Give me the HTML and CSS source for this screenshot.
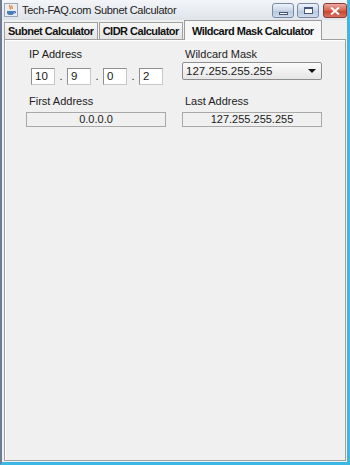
FILE: index.html
```html
<!DOCTYPE html>
<html lang="en">
<head>
  <meta charset="UTF-8">
  <title>Tech-FAQ.com Subnet Calculator</title>
  <link rel="stylesheet" href="styles.css">
</head>
<body>
  <div class="window">
    <div class="titlebar">
      <svg class="app-icon" width="14" height="14" viewBox="0 0 14 14">
        <rect x="0.5" y="0.5" width="13" height="13" fill="#e9edf2" stroke="#9aa6b6"/>
        <path d="M6 2 C4.5 3.5 7.5 4.5 6 6.5 M8 2.5 C7 4 9 4.5 8 6" fill="none" stroke="#e07820" stroke-width="1.2"/>
        <path d="M3 8 H10 V9.5 C10 11 9 12 7.5 12 H5.5 C4 12 3 11 3 9.5 Z" fill="#4a7ab8"/>
        <path d="M10 8.5 H11.5 V10 H10" fill="none" stroke="#4a7ab8" stroke-width="1"/>
      </svg>
      <span class="title">Tech-FAQ.com Subnet Calculator</span>
      <div class="controls">
        <div class="ctl"><span class="min-glyph"></span></div>
        <div class="ctl"><span class="max-glyph"></span></div>
        <div class="ctl close">
          <svg width="10" height="8" viewBox="0 0 10 8">
            <path d="M1 0.5 L9 7.5 M9 0.5 L1 7.5" stroke="#fff" stroke-width="2"/>
          </svg>
        </div>
      </div>
    </div>

    <div class="tabs">
      <div class="tab">Subnet Calculator</div>
      <div class="tab">CIDR Calculator</div>
      <div class="tab active">Wildcard Mask Calculator</div>
    </div>

    <div class="panel">
      <div class="row">
        <div class="col">
          <div class="label">IP Address</div>
          <div class="ip-row">
            <div class="octet">10</div><span class="dot">.</span>
            <div class="octet">9</div><span class="dot">.</span>
            <div class="octet">0</div><span class="dot">.</span>
            <div class="octet">2</div>
          </div>
        </div>
        <div class="col">
          <div class="label">Wildcard Mask</div>
          <div class="combo">
            <span>127.255.255.255</span>
            <span class="arrow"></span>
          </div>
        </div>
      </div>

      <div class="row second">
        <div class="col">
          <div class="label">First Address</div>
          <div class="readout">0.0.0.0</div>
        </div>
        <div class="col">
          <div class="label">Last Address</div>
          <div class="readout">127.255.255.255</div>
        </div>
      </div>
    </div>
  </div>
</body>
</html>
```

FILE: styles.css
```css
* {
  box-sizing: border-box;
  margin: 0;
  padding: 0;
}

body {
  width: 350px;
  height: 465px;
  background: #f0f0f0;
  font-family: "Liberation Sans", Arial, sans-serif;
  font-size: 11px;
  color: #1a1a1a;
}

.window {
  width: 350px;
  height: 465px;
  display: flex;
  flex-direction: column;
  border-left: 2px solid #6f7b92;
  border-right: 3px solid #3cb8e6;
  border-bottom: 3px solid #3cb8e6;
  background: #f0f0f0;
}

.titlebar {
  height: 20px;
  display: flex;
  align-items: center;
  background: linear-gradient(#f3f5f8, #dfe4ea);
  padding-left: 2px;
}

.app-icon {
  flex: none;
}

.title {
  margin-left: 4px;
  font-size: 11px;
  letter-spacing: -0.3px;
  color: #222;
}

.controls {
  margin-left: auto;
  display: flex;
  gap: 3px;
  align-self: flex-start;
  margin-top: 3px;
}

.ctl {
  width: 22px;
  height: 15px;
  border: 1px solid #7a8aa6;
  border-radius: 3px;
  background: linear-gradient(#eef3fa 0%, #c9d6e8 50%, #b4c6de 51%, #cfdcec 100%);
  display: flex;
  align-items: center;
  justify-content: center;
}

.ctl.close {
  width: 24px;
  margin-left: 1px;
  border-color: #8c3a32;
  background: linear-gradient(#eba99f 0%, #d9624f 50%, #c7412c 51%, #d8705c 100%);
}

.min-glyph {
  width: 9px;
  height: 3px;
  margin-top: 5px;
  background: #fff;
  border: 1px solid #46577a;
}

.max-glyph {
  width: 9px;
  height: 7px;
  background: #fff;
  border: 1px solid #46577a;
  border-top-width: 2px;
}

.tabs {
  height: 19px;
  display: flex;
  align-items: flex-end;
  padding-left: 2px;
  position: relative;
  z-index: 1;
}

.tab {
  height: 17px;
  padding: 0 3px;
  display: flex;
  align-items: center;
  border: 1px solid #a0a0a0;
  border-bottom: none;
  margin-right: 1px;
  background: linear-gradient(#f6f6f6, #e4e4e4);
  font-weight: bold;
  letter-spacing: -0.5px;
  color: #111;
}

.tab.active {
  height: 20px;
  margin-bottom: -1px;
  padding: 0 7px;
  background: #f7f7f7;
  border-color: #9c9c9c;
}

.panel {
  flex: 1;
  margin: 0 1px 1px 2px;
  border: 1px solid #a0a0a0;
  box-shadow: inset 1px 1px 0 #fff;
  background: #f0f0f0;
  padding: 8px 0 0 21px;
}

.row {
  display: flex;
  gap: 16px;
}

.row.second {
  margin-top: 10px;
}

.col {
  width: 140px;
  display: flex;
  flex-direction: column;
}

.label {
  margin-left: 3px;
  line-height: 13px;
  color: #222;
}

.ip-row {
  display: flex;
  align-items: center;
  margin-top: 7px;
  margin-left: 5px;
}

.octet {
  width: 24px;
  height: 17px;
  background: #fff;
  border: 1px solid #8f8f8f;
  border-right-color: #c8c8c8;
  border-bottom-color: #c8c8c8;
  padding-left: 3px;
  line-height: 15px;
  font-size: 11.5px;
}

.dot {
  width: 12px;
  text-align: center;
  font-size: 11px;
  line-height: 15px;
}

.combo {
  margin-top: 1px;
  height: 18px;
  border: 1px solid #8e8e8e;
  border-radius: 2px;
  background: linear-gradient(#fbfbfb, #e6e6e6);
  display: flex;
  align-items: center;
  padding: 0 5px 0 3px;
  font-size: 11.5px;
}

.arrow {
  margin-left: auto;
  width: 0;
  height: 0;
  border-left: 4px solid transparent;
  border-right: 4px solid transparent;
  border-top: 4px solid #111;
}

.readout {
  margin-top: 4px;
  height: 15px;
  border: 1px solid #a8a8a8;
  background: #f0f0f0;
  text-align: center;
  line-height: 13px;
  font-size: 11px;
}
```
